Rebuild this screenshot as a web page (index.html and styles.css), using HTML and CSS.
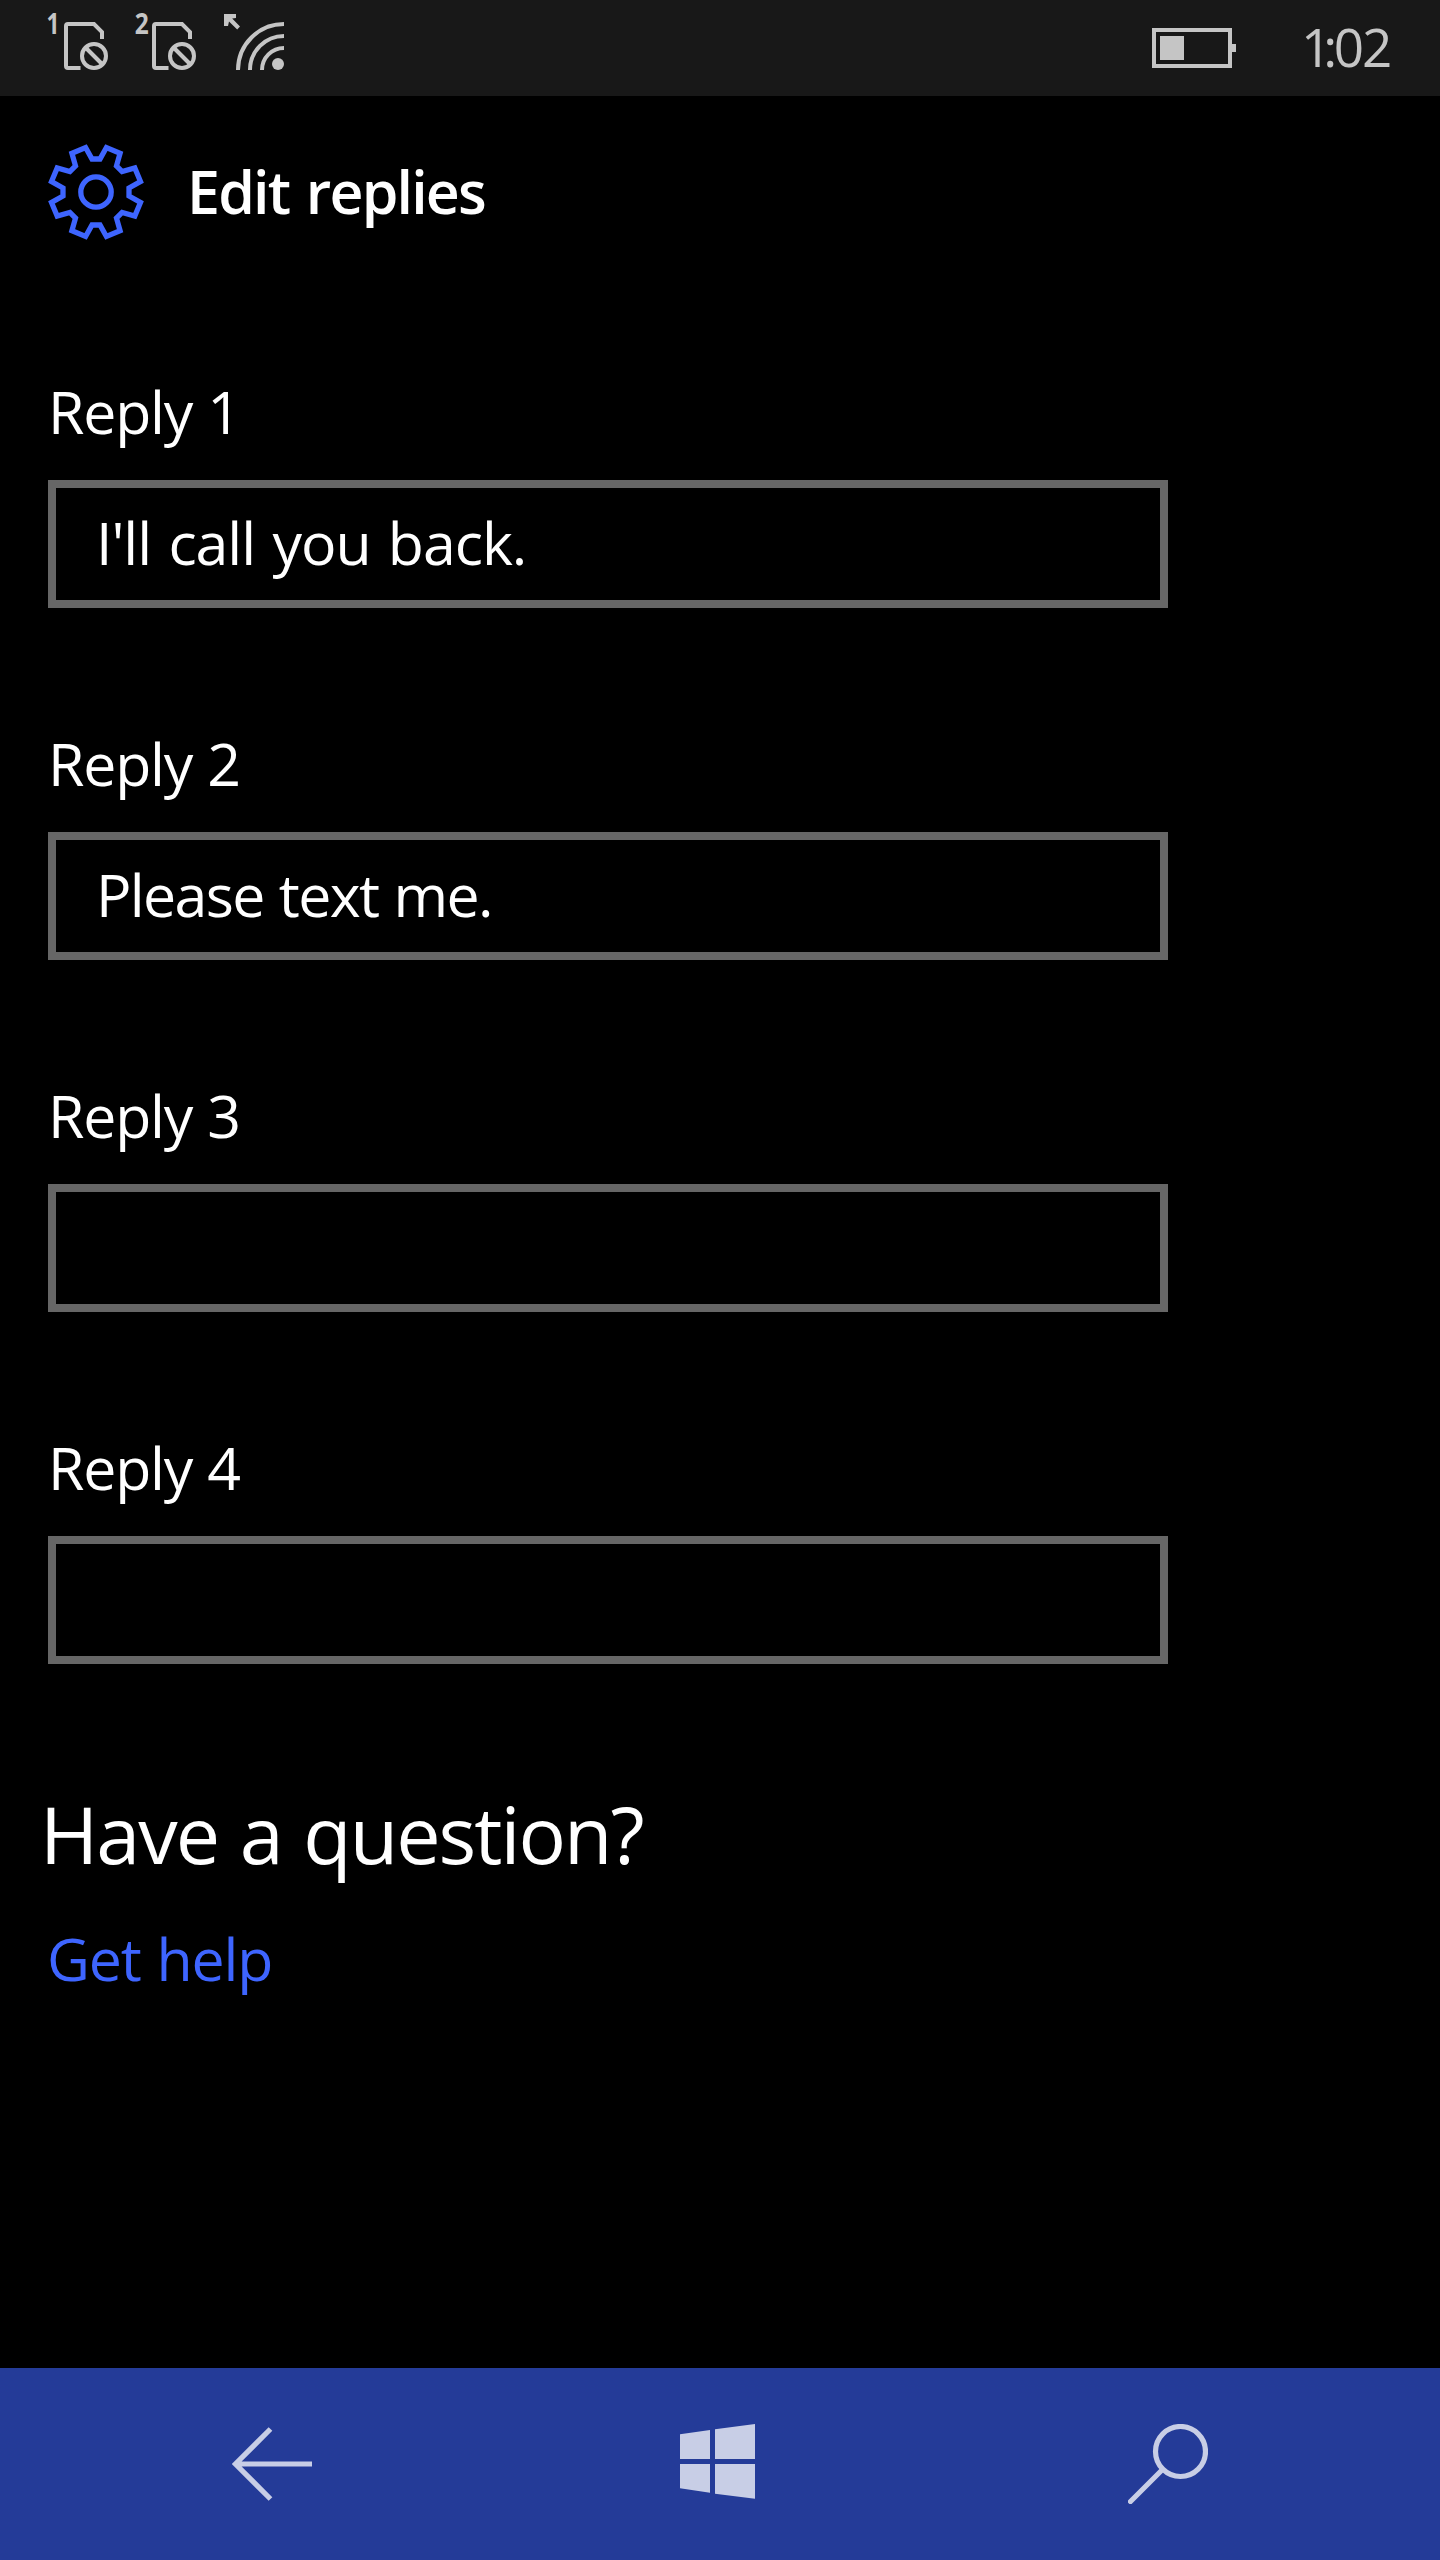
FILE: index.html
```html
<!DOCTYPE html>
<html lang="en">
<head>
  <meta charset="utf-8">
  <title>Edit replies</title>
  <link rel="stylesheet" href="styles.css">
</head>
<body>
  <div class="phone">
    <div class="status-bar">
      <svg class="status-icon" viewBox="0 0 64 96">
        <text x="0.5" y="34" textLength="13" lengthAdjust="spacingAndGlyphs">1</text>
        <path d="M56 39V32L48 24H22Q20 24 20 26V66Q20 68 22 68H34.5"/>
        <circle cx="48" cy="56" r="12"/>
        <path d="M39.5 47.5L56.5 64.5"/>
      </svg>
      <svg class="status-icon" viewBox="0 0 64 96">
        <text x="0.8" y="34" textLength="14" lengthAdjust="spacingAndGlyphs">2</text>
        <path d="M56 39V32L48 24H22Q20 24 20 26V66Q20 68 22 68H34.5"/>
        <circle cx="48" cy="56" r="12"/>
        <path d="M39.5 47.5L56.5 64.5"/>
      </svg>
      <svg class="status-icon" viewBox="0 0 64 96">
        <path class="solid" d="M2 14H14V18L10.2 18.6L18 26.6L15.2 29.4L7 21.4L6 26H2Z"/>
        <path d="M16 70A46 46 0 0 1 62 24M28 70A34 34 0 0 1 62 36M40 70A22 22 0 0 1 62 48"/>
        <circle class="solid" cx="56" cy="64" r="6"/>
      </svg>
      <svg class="battery" viewBox="0 0 84 40">
        <path d="M0 0H80V16H84V24H80V40H0ZM4 4V36H76V4ZM8 8H32V32H8Z" fill-rule="evenodd"/>
      </svg>
      <div class="clock"><span class="hour">1</span><span class="colon">:</span><span class="minutes">02</span></div>
    </div>

    <header class="page-header">
      <svg class="gear" viewBox="-48 -48 96 96">
        <circle r="15.2"/>
        <path d="M-4-33H4L10.4-44.5L24.1-38.8L20.5-26.1L26.1-20.5L38.8-24.1L44.5-10.4L33-4V4L44.5 10.4L38.8 24.1L26.1 20.5L20.5 26.1L24.1 38.8L10.4 44.5L4 33H-4L-10.4 44.5L-24.1 38.8L-20.5 26.1L-26.1 20.5L-38.8 24.1L-44.5 10.4L-33 4V-4L-44.5-10.4L-38.8-24.1L-26.1-20.5L-20.5-26.1L-24.1-38.8L-10.4-44.5Z"/>
      </svg>
      <h1 class="title">Edit replies</h1>
    </header>

    <main class="content">
      <form class="replies">
        <div class="field">
          <label class="label" for="reply1">Reply 1</label>
          <input class="box box-wide" id="reply1" type="text" value="I'll call you back.">
        </div>
        <div class="field">
          <label class="label" for="reply2">Reply 2</label>
          <input class="box" id="reply2" type="text" value="Please text me.">
        </div>
        <div class="field">
          <label class="label" for="reply3">Reply 3</label>
          <input class="box" id="reply3" type="text">
        </div>
        <div class="field">
          <label class="label" for="reply4">Reply 4</label>
          <input class="box" id="reply4" type="text">
        </div>
      </form>
      <h2 class="question">Have a question?</h2>
      <a class="help">Get help</a>
    </main>

    <nav class="nav-bar">
      <svg class="nav-icon" viewBox="0 0 80 80">
        <path d="M38.5 5L3.5 40L38.5 75M4 40H80"/>
      </svg>
      <svg class="nav-icon" viewBox="0 0 80 80">
        <path class="pane" d="M0 10.3L30 6V35H0ZM35 5.3L75 0V35H35ZM0 40H30V68.7L0 64.3ZM35 40H75V74.7L35 69.7Z"/>
      </svg>
      <svg class="nav-icon" viewBox="0 0 80 80">
        <circle cx="52.5" cy="27.5" r="25"/>
        <path class="handle" d="M34.5 45.5L2.5 77.5"/>
      </svg>
    </nav>
  </div>
</body>
</html>
```
FILE: styles.css
```css
* {
  box-sizing: border-box;
}

body {
  margin: 0;
  background: #000;
  color: #fff;
  font-family: "Open Sans", "Noto Sans", sans-serif;
  font-size: 59px;
}

.phone {
  display: flex;
  flex-direction: column;
  width: 1440px;
  height: 2560px;
}

.status-bar {
  display: flex;
  align-items: center;
  gap: 24px;
  height: 96px;
  padding-left: 46px;
  background: #181818;
  color: #c5c5c5;
}

.status-icon {
  width: 64px;
  height: 96px;
  fill: none;
  stroke: #c5c5c5;
  stroke-width: 4;
}

.status-icon text {
  fill: #c5c5c5;
  stroke: none;
  font-size: 28px;
  font-weight: 700;
}

.status-icon .solid {
  fill: #c5c5c5;
  stroke: none;
}

.battery {
  width: 84px;
  height: 40px;
  margin-left: auto;
  fill: #c5c5c5;
}

.clock {
  align-self: flex-start;
  width: 139px;
  margin-left: 41px;
  font-size: 53px;
  font-weight: 400;
  line-height: 94px;
  white-space: nowrap;
}

.hour {
  letter-spacing: -8px;
}

.colon {
  letter-spacing: -3.5px;
}

.minutes {
  letter-spacing: -2px;
}

.page-header {
  display: flex;
  align-items: center;
  gap: 43px;
  height: 96px;
  margin-top: 48px;
  padding-left: 48px;
}

.gear {
  width: 96px;
  height: 96px;
  fill: none;
  stroke: #3e65ff;
  stroke-width: 5.3;
}

.title {
  margin: 0;
  padding-bottom: 2px;
  font-size: 59px;
  font-weight: 600;
  line-height: 80px;
  letter-spacing: -1.8px;
  word-spacing: 3px;
}

.content {
  display: flex;
  flex: 1;
  flex-direction: column;
  align-items: flex-start;
  padding: 131px 48px 0;
}

.replies {
  display: flex;
  flex-direction: column;
  gap: 114px;
}

.field {
  display: flex;
  flex-direction: column;
  gap: 29px;
}

.field + .field {
  padding-top: 1px;
}

.label {
  line-height: 80px;
  letter-spacing: -1.2px;
  word-spacing: 1px;
}

.box {
  width: 1120px;
  height: 128px;
  padding: 0 40px 4px;
  border: 8px solid #666;
  border-radius: 0;
  outline: none;
  background: #000;
  color: #fff;
  font: inherit;
  letter-spacing: -1.65px;
  word-spacing: 1.5px;
}

.box-wide {
  letter-spacing: -1.03px;
  word-spacing: 3px;
}

.question {
  margin: 120px 0 0 -8px;
  font-size: 79px;
  font-weight: 400;
  line-height: 100px;
  letter-spacing: -1.95px;
  word-spacing: 3px;
}

.help {
  margin: 34px 0 0 -1px;
  color: #3e65ff;
  line-height: 80px;
  letter-spacing: -1.2px;
  word-spacing: 2px;
}

.nav-bar {
  display: flex;
  align-items: center;
  justify-content: space-between;
  height: 192px;
  padding: 0 232px;
  background: #243b98;
}

.nav-icon {
  width: 80px;
  height: 80px;
  fill: none;
  stroke: #c8cee6;
  stroke-width: 5.2;
}

.nav-icon .pane {
  fill: #c8cee6;
  stroke: none;
}

.nav-icon .handle {
  stroke-linecap: round;
}
```
